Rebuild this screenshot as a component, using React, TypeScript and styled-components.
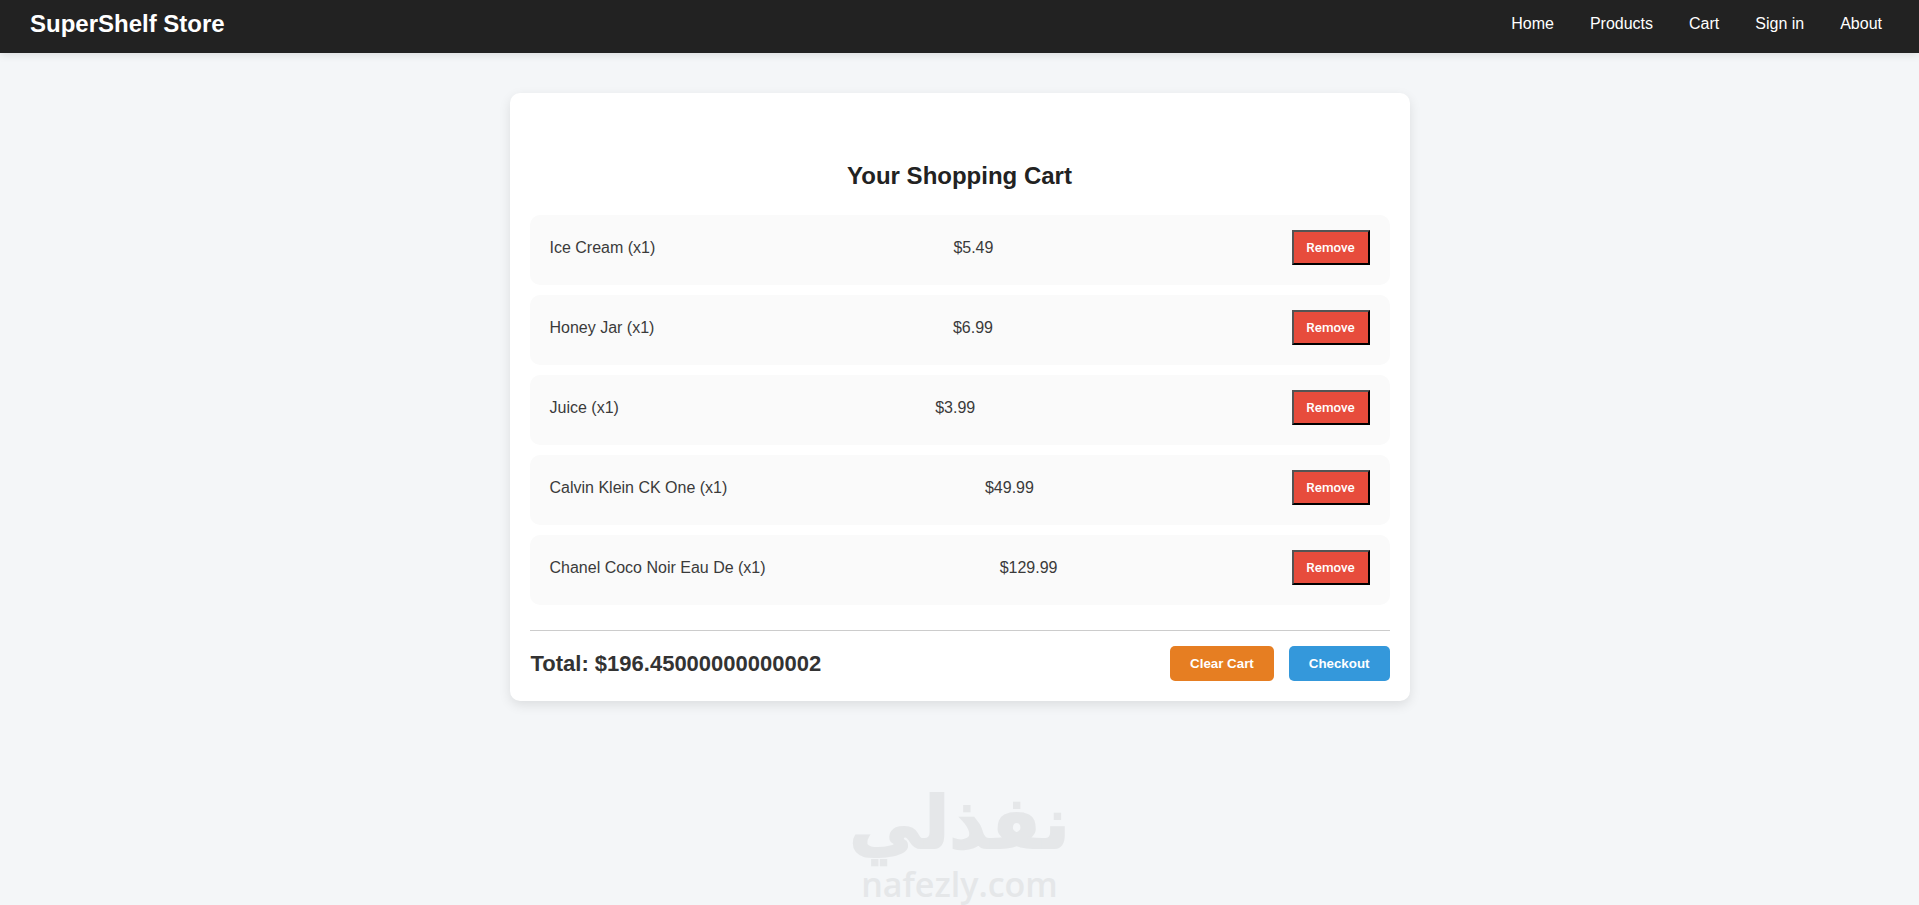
import styled, { createGlobalStyle } from 'styled-components';

const GlobalStyle = createGlobalStyle`
  * {
    box-sizing: border-box;
  }
  html, body {
    margin: 0;
    padding: 0;
    height: 905px;
    overflow: hidden;
    background-color: #f4f6f8;
    font-family: "Liberation Sans", Arial, sans-serif;
  }
`

const Navbar = styled.nav`
  height: 53px;
  padding: 0 37px 6px 30px;
  display: flex;
  align-items: center;
  justify-content: space-between;
  background-color: #222;
  box-shadow: 0 2px 8px rgba(0, 0, 0, 0.1);
`
const Logo = styled.div`
  color: #fff;
  font-size: 24px;
  font-weight: 700;
`
const NavLinks = styled.div`
  display: flex;
  gap: 36px;
`
const NavLink = styled.a`
  color: #fff;
  font-size: 16px;
`

const Card = styled.main`
  width: 900px;
  margin: 40px auto 0;
  padding: 20px;
  background-color: #fff;
  border-radius: 10px;
  box-shadow: 0 4px 12px rgba(0, 0, 0, 0.1);
`
const Title = styled.h2`
  margin: 49px 0 25px;
  text-align: center;
  color: #222;
  font-size: 24px;
  line-height: 28px;
`
const Rows = styled.div`
  display: flex;
  flex-direction: column;
  gap: 10px;
`
const Row = styled.div`
  height: 70px;
  padding: 0 20px 5px;
  display: flex;
  align-items: center;
  justify-content: space-between;
  background-color: #fafafa;
  border-radius: 10px;
  color: #3a3a3a;
  font-size: 16px;
`
const RemoveButton = styled.button`
  width: 78px;
  height: 35px;
  padding: 0;
  background-color: #e74c3c;
  border: 2px outset #000;
  color: #fff;
  font-family: Roboto, sans-serif;
  font-size: 13.33px;
  font-weight: 500;
`
const Footer = styled.div`
  margin-top: 25px;
  padding-top: 15px;
  display: flex;
  align-items: center;
  justify-content: space-between;
  border-top: 1px solid #ccc;
`
const Total = styled.div`
  padding-left: 1px;
  color: #333;
  font-size: 22px;
  font-weight: 700;
`
const Actions = styled.div`
  display: flex;
  gap: 15px;
`
const ActionButton = styled.button<{ $color: string }>`
  height: 35px;
  padding: 0 20px;
  background-color: ${(p) => p.$color};
  border: none;
  border-radius: 5px;
  color: #fff;
  font-family: "Liberation Sans", Arial, sans-serif;
  font-size: 13.33px;
  font-weight: 700;
`

const Watermark = styled.div`
  position: absolute;
  left: 50%;
  top: 786px;
  transform: translateX(-50%);
  display: flex;
  flex-direction: column;
  align-items: center;
  gap: 5px;
  color: #e5e7e9;
  pointer-events: none;
`
const WatermarkArabic = styled.div`
  font-family: "DejaVu Sans", sans-serif;
  font-size: 72px;
  font-weight: 700;
  line-height: 74px;
  -webkit-text-stroke: 2px #e5e7e9;
`
const WatermarkLatin = styled.div`
  font-family: "Open Sans", sans-serif;
  font-size: 34px;
  font-weight: 600;
  line-height: 38px;
`

const navItems = ['Home', 'Products', 'Cart', 'Sign in', 'About']

const items = [
  { name: 'Ice Cream (x1)', price: '$5.49' },
  { name: 'Honey Jar (x1)', price: '$6.99' },
  { name: 'Juice (x1)', price: '$3.99' },
  { name: 'Calvin Klein CK One (x1)', price: '$49.99' },
  { name: 'Chanel Coco Noir Eau De (x1)', price: '$129.99' },
]

const App = () => {
  return (
    <>
      <GlobalStyle />
      <Navbar>
        <Logo>SuperShelf Store</Logo>
        <NavLinks>
          {navItems.map((item) => (
            <NavLink key={item}>{item}</NavLink>
          ))}
        </NavLinks>
      </Navbar>

      <Card>
        <Title>Your Shopping Cart</Title>
        <Rows>
          {items.map((item) => (
            <Row key={item.name}>
              <span>{item.name}</span>
              <span>{item.price}</span>
              <RemoveButton>Remove</RemoveButton>
            </Row>
          ))}
        </Rows>
        <Footer>
          <Total>Total: $196.45000000000002</Total>
          <Actions>
            <ActionButton $color="#e67e22">Clear Cart</ActionButton>
            <ActionButton $color="#3498db">Checkout</ActionButton>
          </Actions>
        </Footer>
      </Card>

      <Watermark>
        <WatermarkArabic>نفذلي</WatermarkArabic>
        <WatermarkLatin>nafezly.com</WatermarkLatin>
      </Watermark>
    </>
  )
}

export default App
